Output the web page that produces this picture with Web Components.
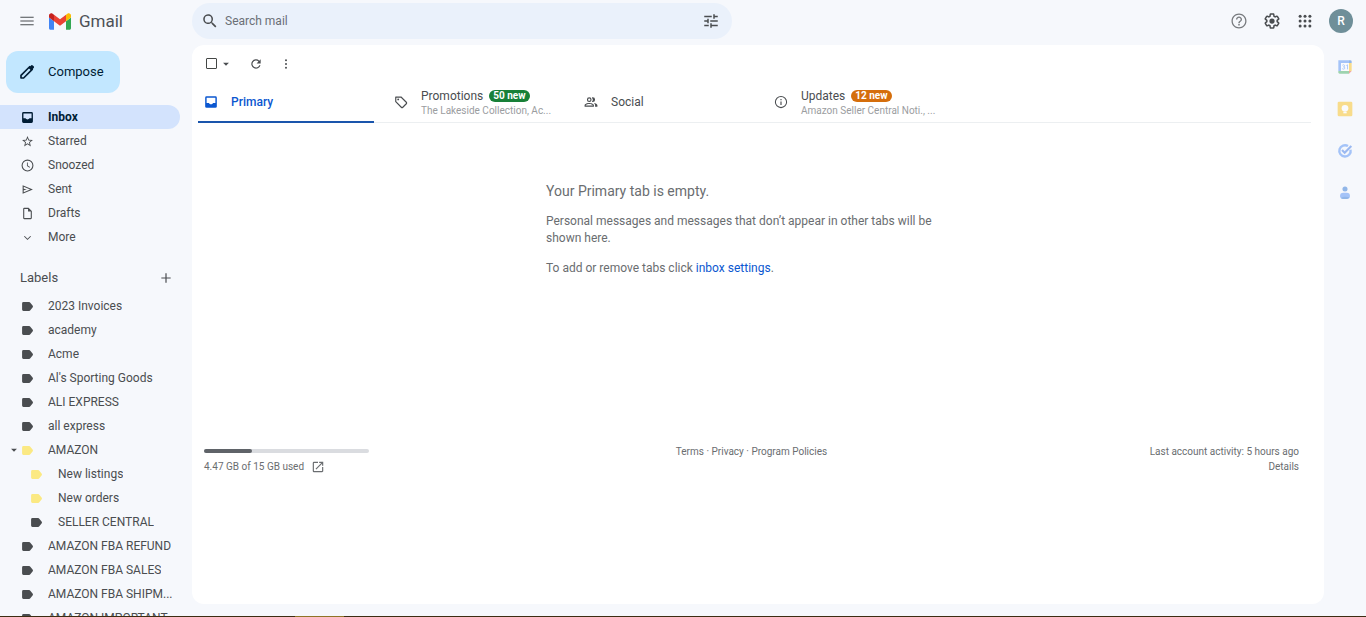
<!DOCTYPE html>
<html lang="en">
<head>
<meta charset="utf-8">
<meta name="viewport" content="width=device-width, initial-scale=1">
<title>Inbox - Gmail</title>
<style>
    body {
        margin: 0;
        background: #f6f8fc;
        color: #4a4d50;
        font: 12px/16px Roboto, "Liberation Sans", sans-serif;
    }
</style>
</head>
<body>
<mail-app></mail-app>

<script>
    const ICONS = {
        menu: '<path d="M2 18.500h20v-1.800H2zM2 12.900h20v-1.800H2zM2 5.500v1.800h20V5.500z"/>',
        search: '<path d="M20.500 19 15.500 14h-.8l-.3-.3A6.500 6.500 0 1 0 13.700 14.400l.3.3v.8l5 5zM9.500 14a4.500 4.500 0 1 1 0-9 4.500 4.500 0 0 1 0 9z"/>',
        tune: '<path d="M3 17v2h6v-2H3zM3 5v2h10V5H3zm10 16v-2h8v-2h-8v-2h-2v6h2zM7 9v2H3v2h4v2h2V9H7zm14 4v-2H11v2h10zm-6-4h2V7h4V5h-4V3h-2v6z"/>',
        help: '<path d="M11 18h2v-2h-2v2zm1-16C6.480 2 2 6.480 2 12s4.480 10 10 10 10-4.480 10-10S17.520 2 12 2zm0 18.300c-4.600 0-8.300-3.700-8.300-8.300S7.400 3.700 12 3.700s8.300 3.700 8.300 8.300-3.700 8.300-8.300 8.300zM12 6c-2.210 0-4 1.790-4 4h1.800c0-1.200 1-2.200 2.200-2.200s2.200 1 2.200 2.200c0 2-3.100 1.750-3.100 5h1.800c0-2.250 3.100-2.500 3.100-5 0-2.210-1.790-4-4-4z"/>',
        settings: '<path d="M13.85 22.25h-3.7c-.74 0-1.36-.54-1.45-1.27l-.27-1.89c-.27-.14-.53-.29-.79-.46l-1.8.72c-.7.26-1.47-.03-1.81-.65L2.2 15.53c-.35-.66-.2-1.44.36-1.88l1.53-1.19c-.01-.15-.02-.3-.02-.46 0-.15.01-.31.02-.46l-1.52-1.19c-.59-.45-.74-1.26-.37-1.88l1.85-3.19c.34-.62 1.11-.9 1.79-.63l1.81.73c.26-.17.52-.32.78-.46l.27-1.91c.09-.7.71-1.25 1.44-1.25h3.7c.74 0 1.36.54 1.45 1.27l.27 1.89c.27.14.53.29.79.46l1.8-.72c.71-.26 1.48.03 1.82.65l1.84 3.18c.36.66.2 1.44-.36 1.88l-1.52 1.19c.01.15.02.3.02.46s-.01.31-.02.46l1.52 1.19c.56.45.72 1.23.37 1.86l-1.86 3.22c-.34.62-1.11.9-1.8.63l-1.8-.72c-.26.17-.52.32-.78.46l-.27 1.91c-.1.68-.72 1.22-1.46 1.22zm-3.23-2h2.76l.37-2.55.53-.22c.44-.18.88-.44 1.34-.78l.45-.34 2.38.96 1.38-2.4-2.03-1.58.07-.56c.03-.26.06-.51.06-.78s-.03-.53-.06-.78l-.07-.56 2.03-1.58-1.39-2.4-2.39.96-.45-.35c-.42-.32-.87-.58-1.33-.77l-.52-.22-.37-2.55h-2.76l-.37 2.55-.53.21c-.44.19-.88.44-1.34.79l-.45.33-2.38-.95-1.39 2.39 2.03 1.58-.07.56a7 7 0 0 0-.06.79c0 .26.02.53.06.78l.07.56-2.03 1.58 1.38 2.4 2.39-.96.45.35c.43.33.86.58 1.33.77l.53.22z"/><circle cx="12" cy="12" r="3.500"/>',
        apps: '<circle cx="5.500" cy="5.500" r="2"/><circle cx="12" cy="5.500" r="2"/><circle cx="18.500" cy="5.500" r="2"/><circle cx="5.500" cy="12" r="2"/><circle cx="12" cy="12" r="2"/><circle cx="18.500" cy="12" r="2"/><circle cx="5.500" cy="18.500" r="2"/><circle cx="12" cy="18.500" r="2"/><circle cx="18.500" cy="18.500" r="2"/>',
        pencil: '<path d="M4 20v-3.500L15.500 5l3.500 3.500L7.500 20z" fill="none" stroke="currentColor" stroke-width="2.200" stroke-linejoin="round"/><path d="m14 6.500 3-3c1-1 2-1 3 0l.6.6c1 1 1 2 0 3l-3 3z"/>',
        inbox: '<path d="M19.500 2h-15A2.500 2.500 0 0 0 2 4.500v15A2.500 2.500 0 0 0 4.500 22h15a2.500 2.500 0 0 0 2.500-2.500v-15A2.500 2.500 0 0 0 19.500 2zm0 11.500h-4c-.6 1.300-2 2.200-3.500 2.200s-2.900-.9-3.500-2.200h-4v-9h15z"/>',
        star: '<path d="m22 9.240-7.190-.62L12 2 9.190 8.630 2 9.240l5.460 4.730L5.820 21 12 17.270 18.180 21l-1.630-7.030zM12 15.400l-3.760 2.270 1-4.280-3.320-2.880 4.380-.38L12 6.100l1.710 4.040 4.380.38-3.320 2.880 1 4.280z"/>',
        clock: '<path d="M12 1a11 11 0 1 0 0 22 11 11 0 0 0 0-22zm0 20a9 9 0 1 1 0-18 9 9 0 0 1 0 18z"/><path d="M12.500 6.500H11V13l4.800 3.200.9-1.400-4.200-2.600z"/>',
        send: '<path d="M3 4v16l19-8zm2 3.010L16.850 12 5 16.990V13.600l6-1.600-6-1.600z"/>',
        draft: '<path d="M14 1.500H6a2 2 0 0 0-2 2v17c0 1.100.9 2 2 2h12a2 2 0 0 0 2-2v-13zm4 19H6v-17h7v5h5z"/>',
        expand: '<path d="m6.800 9-1.300 1.300 6.500 6.500 6.500-6.500L17.200 9 12 14.200z"/>',
        caret: '<path d="m5 9 7 7 7-7z"/>',
        add: '<path d="M19 12.900h-6.100V19h-1.800v-6.100H5v-1.800h6.100V5h1.800v6.100H19z"/>',
        label: '<path d="M17.200 5.200c-.6-.8-1.300-1.300-2.300-1.300H4.500A2.500 2.500 0 0 0 2 6.400v11.200A2.500 2.500 0 0 0 4.500 20.100h10.400c1 0 1.700-.5 2.300-1.300l4.500-5.500c.6-.8.6-1.800 0-2.600z"/>',
        refresh: '<path d="M17.650 6.350A8 8 0 1 0 19.730 14h-2.080A6 6 0 1 1 16.220 7.780L13 11h7V4z"/>',
        more: '<circle cx="12" cy="5.500" r="1.700"/><circle cx="12" cy="12" r="1.700"/><circle cx="12" cy="18.500" r="1.700"/>',
        tag: '<path d="M3 3.500v8L12.500 21c.8.8 1.800.8 2.600 0l6-6c.8-.8.8-1.800 0-2.600L12 3.500z" fill="none" stroke="currentColor" stroke-width="2" stroke-linejoin="round"/><circle cx="7.200" cy="7.500" r="1.600"/>',
        people: '<path d="M9 12a4 4 0 1 0 0-8 4 4 0 0 0 0 8zm0-6a2 2 0 1 1 0 4 2 2 0 0 1 0-4zm0 7.500c-2.700 0-8 1.300-8 4V20h16v-2.500c0-2.700-5.300-4-8-4zM3 18v-.5c0-.7 3.100-2 6-2s6 1.300 6 2v.5zM15 12a4 4 0 1 0 0-8c-.5 0-1 .1-1.400.3a5.900 5.900 0 0 1 0 7.400c.4.2.9.3 1.400.3zM16.700 13.700c1.400.9 2.300 2.100 2.300 3.800V20h4v-2.500c0-2-3.200-3.400-6.300-3.800z"/>',
        info: '<path d="M11 17h2v-6h-2zm0-8h2V7h-2z"/><circle cx="12" cy="12" r="9.600" fill="none" stroke="currentColor" stroke-width="1.800"/>',
        launch: '<path d="M19 19H5V5h7V3H5a2 2 0 0 0-2 2v14a2 2 0 0 0 2 2h14c1.100 0 2-.9 2-2v-7h-2zM14 3v2h3.590l-9.830 9.830 1.410 1.410L19 6.410V10h2V3z"/>',
        calendar: '<path fill="#4285f4" d="M2 2h16v4H6v12H2z"/><path fill="#1967d2" d="M18 2h2a2 2 0 0 1 2 2v2h-4z"/><path fill="#fbbc04" d="M18 6h4v12h-4z"/><path fill="#34a853" d="M6 18h12v4H4a2 2 0 0 1-2-2v-2z"/><path fill="#ea4335" d="m18 22 4-4h-4z"/><path fill="#fff" d="M6 6h12v12H6z"/><path d="M8 9.500c1-1.500 3.500-1 3.500.8 0 1-.8 1.500-1.800 1.500 1.300 0 2.100.7 2.100 1.700 0 2-3 2.500-4 .7M14 9.800l1.800-1.100V15.500" fill="none" stroke="#4285f4" stroke-width="1.300"/>',
        keep: '<rect x="1" y="1" width="22" height="22" rx="2" fill="#fbbc04"/><circle cx="12" cy="11" r="5" fill="#fff"/><path fill="#fff" d="M9.500 16h5v2.500h-5z"/>',
        tasks: '<path d="M16.500 4.600A8.500 8.500 0 1 0 20.300 10" fill="none" stroke="#4285f4" stroke-width="3.600"/><path d="m7.500 10.500 4 4L21.500 4.500" fill="none" stroke="#2f6fe4" stroke-width="3.200"/>',
        contacts: '<circle cx="12" cy="6" r="3.800" fill="#1967d2"/><path fill="#4285f4" d="M4.500 16.500a5 5 0 0 1 5-5h5a5 5 0 0 1 5 5c0 3-2 4.500-5 4.500h-5c-3 0-5-1.500-5-4.500z"/><path fill="#1967d2" d="M6 19.500c2-2 9-2.500 12.500-1-.9 2-2.300 2.500-4 2.500h-5c-1.500 0-2.700-.5-3.500-1.500z"/>'
    };

    // Markup shared by every element: a shadow root filled from a template string
    class MailElement extends HTMLElement {
        connectedCallback() {
            if (this.shadowRoot) return;
            this.attachShadow({ mode: 'open' });
            this.shadowRoot.innerHTML = `
                <style>
                    * { box-sizing: border-box; }
                    button, input { font: inherit; color: inherit; }
                    button {
                        display: flex;
                        align-items: center;
                        justify-content: center;
                        padding: 0;
                        border: 0;
                        background: none;
                        cursor: pointer;
                    }
                    a { color: inherit; text-decoration: none; }
                </style>
                ${this.render()}
            `;
        }
    }

    class MailIcon extends MailElement {
        render() {
            return `
                <style>
                    :host { display: block; flex: none; width: var(--icon-size, 16px); height: var(--icon-size, 16px); }
                    svg { display: block; width: 100%; height: 100%; fill: currentColor; }
                </style>
                <svg viewBox="0 0 24 24" aria-hidden="true">${ICONS[this.getAttribute('name')]}</svg>
            `;
        }
    }

    class MailHeader extends MailElement {
        render() {
            return `
                <style>
                    :host { display: flex; align-items: flex-start; height: 45px; padding: 3px 13px 0 0; }
                    .brand { display: flex; align-items: center; width: 192px; height: 36px; padding-left: 19px; flex: none; }
                    .brand a { display: flex; align-items: center; gap: 8px; margin-left: 14px; font: 17px/24px Roboto, sans-serif; color: #4d5156; }
                    .brand svg { display: block; width: 22px; height: 17px; }
                    form {
                        display: flex;
                        align-items: center;
                        flex: 0 1 540px;
                        height: 36px;
                        padding: 0 12px 0 9px;
                        gap: 6px;
                        border-radius: 18px;
                        background: #eaf1fb;
                        --icon-size: 18px;
                    }
                    input { flex: 1; min-width: 0; padding: 0; border: 0; outline: 0; background: none; }
                    input::placeholder { color: #6a6f76; opacity: 1; }
                    .tools { display: flex; align-items: center; gap: 15px; height: 36px; margin-left: auto; --icon-size: 18px; }
                    .help { color: #777a7e; }
                    .avatar { width: 24px; height: 24px; border-radius: 50%; background: #6f8f99; color: #fff; font-weight: 500; }
                </style>
                <div class="brand">
                    <button aria-label="Main menu"><mail-icon name="menu"></mail-icon></button>
                    <a href="#inbox">
                        <svg viewBox="52 42 88 66" aria-hidden="true">
                            <path fill="#4285f4" d="M58 108h14V74L52 59v43c0 3.320 2.690 6 6 6"/>
                            <path fill="#34a853" d="M120 108h14c3.320 0 6-2.690 6-6V59l-20 15"/>
                            <path fill="#fbbc04" d="M120 48v26l20-15v-8c0-7.420-8.470-11.650-14.400-7.200"/>
                            <path fill="#ea4335" d="M72 74V48l24 18 24-18v26L96 92"/>
                            <path fill="#c5221f" d="M52 51v8l20 15V48l-5.600-4.200c-5.940-4.450-14.400-.22-14.400 7.200"/>
                        </svg>
                        Gmail
                    </a>
                </div>
                <form role="search">
                    <button type="button" aria-label="Search"><mail-icon name="search"></mail-icon></button>
                    <input type="text" placeholder="Search mail" aria-label="Search mail">
                    <button type="button" aria-label="Search options"><mail-icon name="tune"></mail-icon></button>
                </form>
                <div class="tools">
                    <button class="help" aria-label="Support"><mail-icon name="help"></mail-icon></button>
                    <button aria-label="Settings"><mail-icon name="settings"></mail-icon></button>
                    <button aria-label="Apps"><mail-icon name="apps"></mail-icon></button>
                    <button class="avatar">R</button>
                </div>
            `;
        }
    }

    class FolderItem extends MailElement {
        render() {
            const icon = this.getAttribute('icon') || 'label';
            const caret = this.hasAttribute('open') ? '<mail-icon class="caret" name="caret"></mail-icon>' : '';
            return `
                <style>
                    :host { display: block; }
                    a { display: flex; align-items: center; height: 24px; margin-right: 12px; border-radius: 0 12px 12px 0; }
                    .lead { display: flex; align-items: center; justify-content: flex-end; flex: none; width: 34px; margin-right: 14px; --icon-size: 13px; }
                    .caret { --icon-size: 10px; margin-right: 2px; }
                    .yellow { color: #fbe983; }
                    .text { white-space: nowrap; overflow: hidden; text-overflow: ellipsis; }
                    :host([nested]) .lead { width: 43px; margin-right: 15px; }
                    :host([active]) a { background: #d3e3fd; color: #001d35; font-weight: 700; }
                </style>
                <a href="#">
                    <span class="lead">
                        ${caret}<mail-icon class="${this.getAttribute('color') || ''}" name="${icon}"></mail-icon>
                    </span>
                    <span class="text"><slot></slot></span>
                </a>
            `;
        }
    }

    class MailSidebar extends MailElement {
        render() {
            return `
                <style>
                    :host { display: block; min-height: 0; padding-top: 6px; overflow: hidden; }
                    .compose {
                        gap: 12px;
                        height: 42px;
                        margin: 0 0 12px 6px;
                        padding: 0 16px 0 12px;
                        border-radius: 12px;
                        background: #c2e7ff;
                        color: #001d35;
                        font-size: 13px;
                        --icon-size: 18px;
                    }
                    .heading { display: flex; align-items: center; justify-content: space-between; margin: 19px 18px 6px 20px; height: 20px; }
                    h2 { margin: 0; font-size: 13px; font-weight: 400; }
                </style>
                <button class="compose"><mail-icon name="pencil"></mail-icon>Compose</button>
                <nav>
                    <folder-item icon="inbox" active>Inbox</folder-item>
                    <folder-item icon="star">Starred</folder-item>
                    <folder-item icon="clock">Snoozed</folder-item>
                    <folder-item icon="send">Sent</folder-item>
                    <folder-item icon="draft">Drafts</folder-item>
                    <folder-item icon="expand">More</folder-item>
                </nav>
                <div class="heading">
                    <h2>Labels</h2>
                    <button aria-label="Create new label"><mail-icon name="add"></mail-icon></button>
                </div>
                <nav>
                    <folder-item>2023 Invoices</folder-item>
                    <folder-item>academy</folder-item>
                    <folder-item>Acme</folder-item>
                    <folder-item>Al's Sporting Goods</folder-item>
                    <folder-item>ALI EXPRESS</folder-item>
                    <folder-item>all express</folder-item>
                    <folder-item color="yellow" open>AMAZON</folder-item>
                    <folder-item color="yellow" nested>New listings</folder-item>
                    <folder-item color="yellow" nested>New orders</folder-item>
                    <folder-item nested>SELLER CENTRAL</folder-item>
                    <folder-item>AMAZON FBA REFUND</folder-item>
                    <folder-item>AMAZON FBA SALES</folder-item>
                    <folder-item>AMAZON FBA SHIPM...</folder-item>
                    <folder-item>AMAZON IMPORTANT</folder-item>
                </nav>
            `;
        }
    }

    class MailToolbar extends MailElement {
        render() {
            return `
                <style>
                    :host { display: flex; align-items: center; height: 37px; padding-left: 14px; --icon-size: 14px; }
                    input { appearance: none; width: 11px; height: 11px; margin: 0; border: 1px solid #444746; border-radius: 1px; outline: 0; }
                    .caret { --icon-size: 10px; margin: 0 18px 0 4px; }
                    .refresh { margin-right: 16px; }
                </style>
                <input type="checkbox" aria-label="Select">
                <button class="caret" aria-label="Select options"><mail-icon name="caret"></mail-icon></button>
                <button class="refresh" aria-label="Refresh"><mail-icon name="refresh"></mail-icon></button>
                <button aria-label="More"><mail-icon name="more"></mail-icon></button>
            `;
        }
    }

    class MailTab extends MailElement {
        render() {
            const badge = this.getAttribute('badge');
            const senders = this.getAttribute('senders');
            return `
                <style>
                    :host { display: block; min-width: 0; }
                    button { justify-content: flex-start; gap: 13px; width: 100%; height: 40px; padding: 0 20px 0 6px; text-align: left; --icon-size: 14px; }
                    .body { min-width: 0; }
                    .title { display: flex; align-items: center; gap: 6px; font-size: 12px; line-height: 16px; }
                    .badge { padding: 0 4px; border-radius: 6px; background: var(--badge); color: #fff; font-size: 10px; line-height: 12px; font-weight: 700; }
                    .senders { font-size: 10px; line-height: 13px; color: #9b9d9f; white-space: nowrap; }
                    :host([selected]) button { position: relative; color: #0b57d0; font-weight: 500; }
                    :host([selected]) button::after {
                        content: "";
                        position: absolute;
                        left: 0;
                        right: 14px;
                        bottom: -1px;
                        height: 2px;
                        background: #1a55ac;
                    }
                </style>
                <button role="tab">
                    <mail-icon name="${this.getAttribute('icon')}"></mail-icon>
                    <span class="body">
                        <span class="title"><slot></slot>${badge ? `<span class="badge">${badge}</span>` : ''}</span>
                        ${senders ? `<div class="senders">${senders}</div>` : ''}
                    </span>
                </button>
            `;
        }
    }

    class EmptyTab extends MailElement {
        render() {
            return `
                <style>
                    :host { display: block; width: 424px; max-width: 100%; margin: 58px auto 167px; color: #6a6d70; }
                    h1 { margin: 0; font-size: 14px; line-height: 20px; font-weight: 400; }
                    p { max-width: 400px; margin: 0 0 13px; line-height: 17px; }
                    h1 + p { margin-top: 12px; }
                    p:last-child { margin-bottom: 0; }
                    a { color: #0b57d0; }
                </style>
                <h1>Your Primary tab is empty.</h1>
                <p>Personal messages and messages that don’t appear in other tabs will be shown here.</p>
                <p>To add or remove tabs click <a href="#settings">inbox settings</a>.</p>
            `;
        }
    }

    class MailFooter extends MailElement {
        render() {
            return `
                <style>
                    :host { display: grid; grid-template-columns: 1fr 1fr 1fr; padding: 0 25px 0 12px; font-size: 10px; line-height: 15px; color: #6a6d70; }
                    progress { display: block; appearance: none; width: 165px; height: 4px; margin: 5px 0 6px; border: 0; }
                    progress::-webkit-progress-bar { background: #dadce0; border-radius: 2px; }
                    progress::-webkit-progress-value { background: #5f6368; border-radius: 2px; }
                    .usage { display: flex; align-items: center; gap: 7px; --icon-size: 14px; }
                    .policies { text-align: center; }
                    .activity { text-align: right; }
                </style>
                <div>
                    <progress max="100" value="29" aria-label="Storage used"></progress>
                    <a class="usage" href="#storage">4.47 GB of 15 GB used <mail-icon name="launch"></mail-icon></a>
                </div>
                <div class="policies"><a href="#terms">Terms</a> · <a href="#privacy">Privacy</a> · <a href="#policies">Program Policies</a></div>
                <div class="activity">Last account activity: 5 hours ago<br><a href="#details">Details</a></div>
            `;
        }
    }

    class AppRail extends MailElement {
        render() {
            return `
                <style>
                    :host { display: flex; flex-direction: column; align-items: center; gap: 26px; padding-top: 14px; }
                    button { opacity: 0.45; }
                </style>
                <button aria-label="Calendar"><mail-icon name="calendar"></mail-icon></button>
                <button aria-label="Keep"><mail-icon name="keep"></mail-icon></button>
                <button aria-label="Tasks"><mail-icon name="tasks"></mail-icon></button>
                <button aria-label="Contacts"><mail-icon name="contacts"></mail-icon></button>
            `;
        }
    }

    class MailApp extends MailElement {
        render() {
            return `
                <style>
                    :host {
                        display: grid;
                        grid-template: auto minmax(0, 1fr) 1px / 192px minmax(0, 1fr) 42px;
                        height: 100vh;
                        overflow: hidden;
                    }
                    mail-header { grid-column: 1 / -1; }
                    main { margin-bottom: 12px; border-radius: 12px; background: #fff; overflow: hidden; }
                    .tabs {
                        display: grid;
                        grid-template-columns: repeat(4, minmax(0, 190px));
                        margin: 0 13px 0 6px;
                        border-bottom: 1px solid #eceff1;
                    }
                    .edge { grid-column: 1 / -1; background: linear-gradient(90deg, #3c2c12 295px, #8f7426 295px 344px, #3c2c12 344px); }
                </style>
                <mail-header></mail-header>
                <mail-sidebar></mail-sidebar>
                <main>
                    <mail-toolbar></mail-toolbar>
                    <div class="tabs" role="tablist">
                        <mail-tab icon="inbox" selected>Primary</mail-tab>
                        <mail-tab icon="tag" badge="50 new" senders="The Lakeside Collection, Ac..." style="--badge: #188038">Promotions</mail-tab>
                        <mail-tab icon="people">Social</mail-tab>
                        <mail-tab icon="info" badge="12 new" senders="Amazon Seller Central Noti., ..." style="--badge: #d56e0c">Updates</mail-tab>
                    </div>
                    <empty-tab></empty-tab>
                    <mail-footer></mail-footer>
                </main>
                <app-rail></app-rail>
                <div class="edge"></div>
            `;
        }
    }

    customElements.define('mail-icon', MailIcon);
    customElements.define('mail-header', MailHeader);
    customElements.define('folder-item', FolderItem);
    customElements.define('mail-sidebar', MailSidebar);
    customElements.define('mail-toolbar', MailToolbar);
    customElements.define('mail-tab', MailTab);
    customElements.define('empty-tab', EmptyTab);
    customElements.define('mail-footer', MailFooter);
    customElements.define('app-rail', AppRail);
    customElements.define('mail-app', MailApp);
</script>
</body>
</html>
